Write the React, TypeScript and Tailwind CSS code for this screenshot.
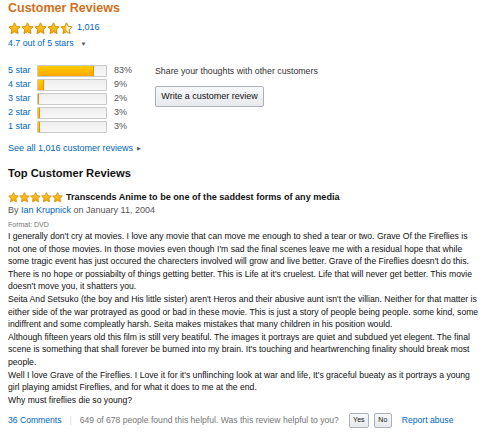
import React from 'react';

const STAR_PATH = 'M12 1.6l3.1 6.6 7.2.9-5.3 5 1.4 7.2L12 17.8l-6.4 3.5 1.4-7.2-5.3-5 7.2-.9z';

// one star; fill can be "full" or "half"
function Star({ size, fill }: { size: number; fill: 'full' | 'half' }) {
  const id = fill === 'full' ? 'starFull' : 'starHalf';
  return (
    <svg width={size} height={size} viewBox="0 0 24 24" className="shrink-0">
      <defs>
        <linearGradient id="starGold" x1="0" y1="0" x2="0" y2="1">
          <stop offset="0" stopColor="#ffd23a" />
          <stop offset="1" stopColor="#f5a400" />
        </linearGradient>
        <clipPath id={id}>
          <rect x="0" y="0" width={fill === 'full' ? 24 : 12} height="24" />
        </clipPath>
      </defs>
      <path d={STAR_PATH} fill="#fff" stroke="#d68a00" strokeWidth="1.3" strokeLinejoin="round" />
      <path d={STAR_PATH} fill="url(#starGold)" clipPath={`url(#${id})`} />
      <path d={STAR_PATH} fill="none" stroke="#d68a00" strokeWidth="1.3" strokeLinejoin="round" />
    </svg>
  );
}

const histogram = [
  { label: '5 star', pct: 83 },
  { label: '4 star', pct: 9 },
  { label: '3 star', pct: 2 },
  { label: '2 star', pct: 3 },
  { label: '1 star', pct: 3 },
];

const body = [
  "I generally don't cry at movies. I love any movie that can move me enough to shed a tear or two. Grave Of the Fireflies is not one of those movies. In those movies even though I'm sad the final scenes leave me with a residual hope that while some tragic event has just occured the charecters involved will grow and live better. Grave of the Fireflies doesn't do this. There is no hope or possiabilty of things getting better. This is Life at it's cruelest. Life that will never get better. This movie doesn't move you, it shatters you.",
  "Seita And Setsuko (the boy and His little sister) aren't Heros and their abusive aunt isn't the villian. Neither for that matter is either side of the war protrayed as good or bad in these movie. This is just a story of people being people. some kind, some indiffrent and some compleatly harsh. Seita makes mistakes that many children in his position would.",
  "Although fifteen years old this film is still very beatiful. The images it portrays are quiet and subdued yet elegent. The final scene is something that shall forever be burned into my brain. It's touching and heartwrenching finality should break most people.",
  "Well I love Grave of the Fireflies. I Love it for it's unflinching look at war and life, It's graceful bueaty as it portrays a young girl playing amidst Fireflies, and for what it does to me at the end.",
  'Why must fireflies die so young?',
];

const btn = 'border border-[#adb1b8] rounded-[2px] bg-gradient-to-b from-[#f7f8fa] to-[#e7e9ec] text-[#111]';

export default function App() {
  return (
    <div className="w-[500px] h-[432px] overflow-hidden bg-white px-2 text-[#111] font-['Liberation_Sans',Arial,sans-serif]">
      <h2 className="text-[12.5px] font-bold leading-[16px] text-[#d0701c]">Customer Reviews</h2>

      <div className="flex items-center gap-[4px] mt-[4px] h-[16px]">
        <div className="flex">
          {[0, 1, 2, 3].map(i => <Star key={i} size={13} fill="full" />)}
          <Star size={13} fill="half" />
        </div>
        <span className="text-[9px] text-[#0066c0]">1,016</span>
      </div>
      <div className="flex items-center gap-[7px] mt-[1px] h-[14px] text-[8.8px] text-[#0066c0]">
        <span>4.7 out of 5 stars</span>
        <span className="text-[6px] text-[#555]">▼</span>
      </div>

      <div className="flex mt-[13px]">
        <div className="w-[147px]">
          {histogram.map(row => (
            <div key={row.label} className="flex items-center h-[14px] text-[9px]">
              <span className="w-[29px] text-[#0066c0]">{row.label}</span>
              <div className="w-[70px] h-[12px] border border-[#c9c9c9] rounded-[1px] bg-gradient-to-b from-[#eee] to-[#f8f8f8] overflow-hidden">
                <div
                  className="h-full bg-gradient-to-b from-[#ffce00] to-[#ffa700] border-r border-[#e39400]"
                  style={{ width: `${row.pct}%` }}
                />
              </div>
              <span className="ml-[7px] text-[#555]">{row.pct}%</span>
            </div>
          ))}
        </div>
        <div className="pt-[1px]">
          <p className="text-[8.8px] text-[#333] leading-[12px]">Share your thoughts with other customers</p>
          <button className={`mt-[9px] w-[109px] h-[21px] text-[9px] ${btn}`}>
            Write a customer review
          </button>
        </div>
      </div>

      <div className="flex items-center gap-[4px] mt-[8px] h-[13px] text-[9px] text-[#0066c0]">
        <span>See all 1,016 customer reviews</span>
        <span className="text-[5px] text-[#555]">▶</span>
      </div>

      <h3 className="mt-[10px] text-[11.2px] font-bold leading-[16px] text-[#111]">Top Customer Reviews</h3>

      <div className="flex items-center gap-[3px] mt-[10px] h-[13px]">
        <div className="flex">
          {[0, 1, 2, 3, 4].map(i => <Star key={i} size={11} fill="full" />)}
        </div>
        <span className="text-[9.1px] font-bold">Transcends Anime to be one of the saddest forms of any media</span>
      </div>
      <div className="h-[13px] text-[9px] text-[#555] leading-[13px]">
        By <span className="text-[#0066c0]">Ian Krupnick</span> on January 11, 2004
      </div>
      <div className="mt-[2px] text-[7px] text-[#767676] leading-[11px]">Format: DVD</div>

      <div className="text-[8.65px] leading-[12.6px] text-[#111] w-[473px]">
        {body.map((p, i) => (
          <p key={i}>{p}</p>
        ))}
      </div>

      <div className="flex items-center mt-[6px] h-[16px] text-[8.6px]">
        <span className="text-[#0066c0]">36 Comments</span>
        <span className="mx-[8px] text-[#ddd]">|</span>
        <span className="text-[#767676]">649 of 678 people found this helpful. Was this review helpful to you?</span>
        <button className={`ml-[10px] h-[15px] w-[20px] text-[7px] ${btn}`}>Yes</button>
        <button className={`ml-[5px] h-[15px] w-[18px] text-[7px] ${btn}`}>No</button>
        <span className="ml-[10px] text-[#0066c0]">Report abuse</span>
      </div>
    </div>
  );
}
